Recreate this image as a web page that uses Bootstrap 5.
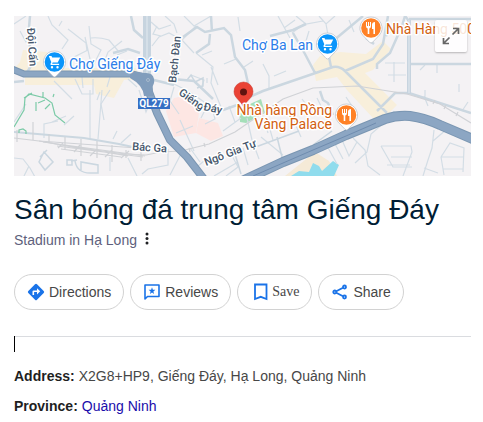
<!DOCTYPE html>
<html lang="vi">
<head>
<meta charset="utf-8">
<meta name="viewport" content="width=device-width, initial-scale=1">
<title>Sân bóng đá trung tâm Giếng Đáy</title>
<link rel="stylesheet" href="https://cdn.jsdelivr.net/npm/bootstrap@5.3.0/dist/css/bootstrap.min.css">
<style>
body{font-family:"Liberation Sans",Arial,sans-serif;font-size:14px;line-height:20px;color:#474747;background:#fff}
.place{padding:16px 12px 0 14px}
.map-view{height:160px;background:#f4f2f4}
.map-view svg{height:160px}
.map-view .expand svg{height:18px}
.map-text{font-family:Roboto,sans-serif;paint-order:stroke;stroke:#fff;stroke-width:3px;stroke-linejoin:round}
.expand{top:4px;right:4px;width:32px;height:32px;background:rgba(255,255,255,.84);border:0;border-radius:2px;box-shadow:0 1px 2px rgba(0,0,0,.25)}
.place-title{font-size:28px;line-height:36px;color:#001d35;margin-top:16px}
.place-kind{color:#5e5f7c;height:24px}
.more{width:20px;height:20px}
.more svg{margin-bottom:2px}
.actions{gap:6px;margin-top:22px}
.pill{height:36px;padding:0 12px;border:1px solid #d2d2d2;border-radius:18px;background:#fff;color:#474747;gap:4px}
.pill-save{padding:0 12px 0 15px;gap:3px;font-family:"Liberation Serif","Times New Roman",serif}
.rule{border-top:1px solid #dadce0;margin-top:26px;height:16px}
.caret{width:1px;height:16px;margin-top:-1px;background:#000}
.facts{margin-top:14px;gap:10px}
.facts dt{color:#1f1f1f}
.facts a{color:#1a0dab}
</style>
<script src="https://cdn.jsdelivr.net/npm/bootstrap@5.3.0/dist/js/bootstrap.bundle.min.js"></script>
</head>
<body>
<main class="place">
<div class="map-view position-relative overflow-hidden">
<svg class="d-block w-100" viewBox="14 16 457 160" preserveAspectRatio="xMinYMin slice" role="img" aria-label="Map">
<path fill="#f4f2f4" d="M14 16h457v160H14z"/>
<!-- built-up areas -->
<g fill="#f8efdb">
<path d="M20 62l3-12 24 2 4 16h86v12h-13l-10 18-18-4-2-9H25v-7l-11-9z"/>
<path d="M313 65l7-9 20-4 26 2 17-13 8 8-18 21-8 3 32 32-13 13h-11l-26-28-10-13-21 4z"/>
</g>
<g fill="#fde6e3"><path d="M166 111l8-13 10-2 15 17-3 20-22 4z"/><path d="M199 118l19 5 5 13-12 5-15-8z"/></g>
<path fill="#a5dfb9" d="M239 109l22-10 4 14-19 10-6-1z"/>
<path fill="#f5ead7" d="M285 176l30-24 14 9 8 15z"/>
<path fill="#90dced" d="M291 176l8-5 10 1 4-9 6 3 3 5 11-10 6 4-5 11zM311 169l3-5 5 4z"/>
<!-- minor streets -->
<g fill="none" stroke="#d3dde5" stroke-width="1.2">
<path d="M48 16l4 9 16 15-6 9M59 26l3-5M68 29l18 14 1 8M89 26l2 18 10 6-8 16M85 37l5 22M91 38q8-1 18 2l10 12M103 65l5-13 14-11M117 55l10-4M70 59l18-9M14 24l12-8M20 31l6 11 8-3M82 77l1 11M110 77l-3 10M54 81l18 18M75 79l7 15h11v-15M100 92l-3 8M128 79l9 8M110 90l-9 14 3 16"/>
<path d="M152 46l7-9 10-4 13 7 12 13M161 36l-8-2 4-8M151 22l8 7 12-4M165 16l9 8 3 9M184 16l10 10 17-10M196 26l-14 14M196 53l17 14-2 16 10 24M202 55l10-4M211 67l7 18M224 64l12-5M238 17l2 14M263 64l6 12v14M274 76l12-5M253 61l-9 6M284 28l11-8M278 16l12 22"/>
<path d="M170 82l20 10 17 12 9 8M191 75l13 5-3 9M207 83v-5M174 87l-4 14 9 13"/>
<path d="M296 16l10 8 17-3M304 24l-12 9M309 31l-3 10M319 16l7 8 9-8M326 24l4 22M385 63h20M388 75h18M394 62v20M420 70l5-5M425 90v8M437 65v8M459 84v8M424 96l4 10M346 97l10 15M392 119l2-8M349 20l5 12"/>
<path d="M90 90v49M102 90l-4 49M14 122l12-18M44 138v-14l14-3M52 122l14-6M64 125l10-9M113 139l4-8M121 143l10-9M14 158l9 1 7 9 5 9M110 157v14M142 174l6-5 20-4v-16M128 158l9 18M139 90l7 22 5-12M24 176l5-10"/>
<path d="M201 118l4-8 8 1 2 8-10 5M223 131l18-13M229 106l6 16M247 118l5 22 7 19M259 104l9 29M261 137l22 18M267 119l6 21M289 110l12 27M302 99l13 17M317 98l6 12M229 150l9 17-12 9M190 148l10 14M198 166l12-10M243 148l5 17M180 120l14 31M176 133l17-7M184 148l-14 27M214 176l24-14"/>
<path d="M326 144l11 20M334 142l9 17M342 140l7 16 8-14M353 138l12 12 3 16 12 9M385 122l-14 12-4 18-12 11M381 146h30l1 6-9 24M381 146l12 21h19M391 157h21M387 165h23M434 130l-2 18-4 12-5 16M424 168l14 5M441 157l9-14 14 5-1 24M441 157l3 18M441 157h23M443 169h20M433 141l14-12M462 111l6-9"/>
</g>
<!-- secondary roads -->
<g fill="none" stroke="#cbd7e0" stroke-width="2.500">
<path d="M30 16l-1 12 2 38-5 8M14 82l10-1M131 16l3 14 9 8M113 53l15-4 12 4M173 79l21 2 19 18M150 79l24 6M183 37l14-10 8 5 19-4 7 7 4 22 10 13 5 22M196 53l13-9 1-10M211 16l1 16M247 98l16-7 70-24q7-1 12 4l42 42M345 71l28-12 10-15 5-28M377 69v-5l13-11 12-27 3-10M377 111l18-18h14l62 20M293 33l12 21 10 19M270 36l23-6 13-6M333 41l30-25M329 57l2 10M320 91l3 9 5 3 5 12M366 38l8 6M396 24l-10 12M223 110l17-6"/>
<path d="M409 19h62M411 64h60M405 16l4 5"/>
<path stroke-width="1.500" d="M313 145l19-14M235 154l6 20M277 137l5 20M253 148l46-17M187 80l4-5 4 7 8-4v8l-6 2"/>
</g>
<path fill="none" stroke="#c7d4df" stroke-width="4" d="M409 20v74"/>
<path fill="none" stroke="#c7d4df" stroke-width="8" d="M147 16v61"/>
<path fill="none" stroke="#e3eaf0" stroke-width="1" d="M147 16v58M409 20v73"/>
<g fill="none" stroke="#cbd7e0" stroke-width="1.500"><path stroke-width="2" d="M14 132l70 6 35 6 32 7"/><path d="M71 161l6-1M67 160v5h5v-5h-5zM75 161q2 12 15 12h8v-8l-17-3v8M44 152l9 10-8 8-6-8zM40 157l7-7"/></g>
<!-- railway -->
<g fill="none" stroke="#d0d2d6" stroke-width="1.200">
<path d="M14 138l25 3 40 7 47 6 20 1 15-3 20-1 28-7 26-12 48-33 30-11 44-2 50 8 33 10 31 19"/>
<path d="M39 141l112 8M43 142l102 14M50 143l78 13M57 146l86 11M61 149l60 8"/>
<path d="M33 122v18M17 130v12M49 134v9M65 137v12M81 139v17M97 141v17M112 145v17M126 150v8M141 152v9M58 148l5-5M74 152l6-7M90 156l7-7M105 157l7-7M121 158l8-7"/>
<path d="M433 104l2-4M444 109l2-4M456 116l2-4M190 152l-1-4M205 147l-1-4M341 107l-1 0"/>
</g>
<g fill="none" stroke="#7bcaa7" stroke-width="1.200"><path d="M14 127l10-17 1-12 4-4 16 4 7 5 3 12 10 8M24 98l8-5M43 92v5M53 97l1-3M36 102v9M38 103l7-3M50 104l-5 5M19 133v-3l4-1 3 2v3"/></g>
<!-- highways -->
<g fill="none" stroke-linejoin="round">
<path stroke="#7a96b2" stroke-width="7" d="M12 69l12 5h108l16 4"/>
<path stroke="#8ca6c3" stroke-width="5" d="M12 69l12 5h108l16 4"/>
<path stroke="#7a96b2" stroke-width="8" d="M148 78l1 14 8 21 13 27 17 17 17 22"/>
<path stroke="#8ca6c3" stroke-width="6" d="M148 78l1 14 8 21 13 27 17 17 17 22"/>
<path stroke="#7a96b2" stroke-width="10" d="M240 182l43-20 30-12 33-15 39-16q12-4 25-3 15 2 30 9l35 15"/>
<path stroke="#8ca6c3" stroke-width="8" d="M240 182l43-20 30-12 33-15 39-16q12-4 25-3 15 2 30 9l35 15"/>
<path stroke="#6f8caf" d="M253 176l60-26 33-14 30-13"/>
</g>
<path fill="#819dbc" d="M130 71l14 2q9-1 10 6 1 4-2 8l1 9h-9q-1-11-14-18z"/><circle cx="148" cy="80" r="1.500" fill="#829bb8" stroke="#b4c5d6" stroke-width=".7"/>
<rect x="138" y="98" width="32" height="11" fill="#356fc4"/>
<text x="154" y="107" text-anchor="middle" font-family="Roboto,sans-serif" font-size="10" font-weight="700" fill="#fff">QL279</text>
<!-- street names -->
<g class="map-text" fill="#45566b" font-size="11" font-weight="500">
<text transform="translate(27 28) rotate(86)">Đội Cấn</text>
<text transform="translate(176 83) rotate(-84)">Bạch Đàn</text>
<text transform="translate(178 94) rotate(36)">Giếng</text>
<text transform="translate(203 110) rotate(12)">Đáy</text>
<text transform="translate(132 150) rotate(4)">Bác Ga</text>
<text transform="translate(206 166) rotate(-21)">Ngô Gia Tự</text>
</g>
<!-- map places -->
<g class="map-text" font-size="14">
<g fill="#2b7de9"><text x="69" y="69">Chợ Giếng Đáy</text><text x="242" y="50">Chợ Ba Lan</text></g>
<g fill="#d2600f"><text x="386" y="34">Nhà Hàng 500</text></g>
</g>
<g>
<path id="pinbase" fill="#fff" stroke="#b8bdc5" stroke-width=".7" d="M54.500 51a11 11 0 0 0-8.300 18.200L53 76.300q1.500 1.400 3 0l6.800-7.100A11 11 0 0 0 54.500 51z"/>
<circle cx="54.500" cy="62" r="9.800" fill="#0a95fb"/>
<path id="cart" fill="#fff" d="M49 56h2.500l.7 1.500h8l-2.500 5h-5l-.6 1.300h7v1.200h-8.300l-.4-1 .9-1.800-2-5H49zM52 66a1.200 1.200 0 1 1 0 2.400 1.200 1.200 0 0 1 0-2.400zm5.500 0a1.200 1.200 0 1 1 0 2.400 1.200 1.200 0 0 1 0-2.400z"/>
<use href="#pinbase" x="273" y="-18"/><circle cx="327.500" cy="44" r="9.800" fill="#0a95fb"/><use href="#cart" x="273" y="-18"/>
<use href="#pinbase" x="316.500" y="-34"/><circle cx="371" cy="28" r="9.800" fill="#ff8126"/>
<path id="fork" fill="#fff" d="M366 22h1v4h1v-4h1v4h1v-4h1v4q0 2-1.700 2.500V34h-1.600v-5.500Q366 28 366 26zM372 25q0-3 3-3v12h-1.600v-5H372z"/>
<use href="#pinbase" x="292" y="53"/><circle cx="346.500" cy="115" r="9.800" fill="#ff8126"/><use href="#fork" x="-24" y="87"/>
<path fill="#ea4335" stroke="#c5362c" stroke-width=".5" d="M243.500 82a9.500 9.500 0 0 0-9.500 9.500c0 7 7.500 9 9.500 16 2-7 9.500-9 9.500-16a9.500 9.500 0 0 0-9.500-9.500z"/>
<circle cx="243.500" cy="92" r="3.500" fill="#601410"/>
</g>
<text class="map-text" font-size="14" fill="#d2600f" text-anchor="end"><tspan x="332" y="115">Nhà hàng Rồng</tspan><tspan x="332" y="129">Vàng Palace</tspan></text>
</svg>
<button type="button" class="expand position-absolute d-flex align-items-center justify-content-center p-0" aria-label="Expand map">
<svg width="18" height="18" viewBox="0 0 18 18" fill="none" stroke="#666" stroke-width="1.700"><path d="M11 1.500h5.500V7M16.500 1.500l-6 6M7 16.500H1.500V11M1.500 16.500l6-6"/></svg>
</button>
</div>
<h1 class="place-title fw-normal mb-0">Sân bóng đá trung tâm Giếng Đáy</h1>
<div class="place-kind d-flex align-items-center">
<span>Stadium in Hạ Long</span>
<button type="button" class="more btn p-0 border-0 d-flex align-items-center justify-content-center" aria-label="More options"><svg width="4" height="16" viewBox="0 0 4 16" fill="#202124"><circle cx="2" cy="3" r="1.500"/><circle cx="2" cy="7.500" r="1.500"/><circle cx="2" cy="12" r="1.500"/></svg></button>
</div>
<div class="actions d-flex flex-wrap">
<button type="button" class="pill d-flex align-items-center"><svg width="18" height="18" viewBox="0 0 18 18"><path fill="#1a73e8" d="M9 .8q.5 0 1 .5L16.700 8q1 1 0 2L10 16.700q-1 1-2 0L1.300 10q-1-1 0-2L8 1.300q.5-.5 1-.5z"/><path fill="#fff" d="M5.500 12V8.500q0-1 1-1H10V5.200L13.200 8.300 10 11.400V9.100H7.100V12z"/></svg><span>Directions</span></button>
<button type="button" class="pill d-flex align-items-center"><svg width="18" height="18" viewBox="0 0 18 18"><path fill="none" stroke="#1a73e8" stroke-width="1.600" stroke-linejoin="round" d="M2 2h14v11.500H4.500L2 16z"/><path fill="#1a73e8" d="M9 4.300l.9 2.400 2.500.1-2 1.600.7 2.500L9 9.500l-2.100 1.400.7-2.500-2-1.600 2.500-.1z"/></svg><span>Reviews</span></button>
<button type="button" class="pill pill-save d-flex align-items-center"><svg width="16" height="18" viewBox="0 0 16 18"><path fill="none" stroke="#1a73e8" stroke-width="1.800" d="M2 1.500h11.500v14.500L7.750 13.800 2 16z"/></svg><span>Save</span></button>
<button type="button" class="pill d-flex align-items-center"><svg width="18" height="18" viewBox="0 0 18 18" fill="none" stroke="#1a73e8" stroke-width="1.800"><path d="M5.300 8.200L12 4.800M5.300 9.800L12 13.200"/><circle cx="3.800" cy="9" r="1.500"/><circle cx="13.500" cy="4" r="1.500"/><circle cx="13.500" cy="14" r="1.500"/></svg><span>Share</span></button>
</div>
<div class="rule"><div class="caret"></div></div>
<dl class="facts d-flex flex-column mb-0">
<div class="d-flex flex-wrap gap-1"><dt>Address:</dt><dd class="mb-0">X2G8+HP9, Giếng Đáy, Hạ Long, Quảng Ninh</dd></div>
<div class="d-flex flex-wrap gap-1"><dt>Province:</dt><dd class="mb-0"><a href="#" class="text-decoration-none">Quảng Ninh</a></dd></div>
</dl>
</main>
</body>
</html>
